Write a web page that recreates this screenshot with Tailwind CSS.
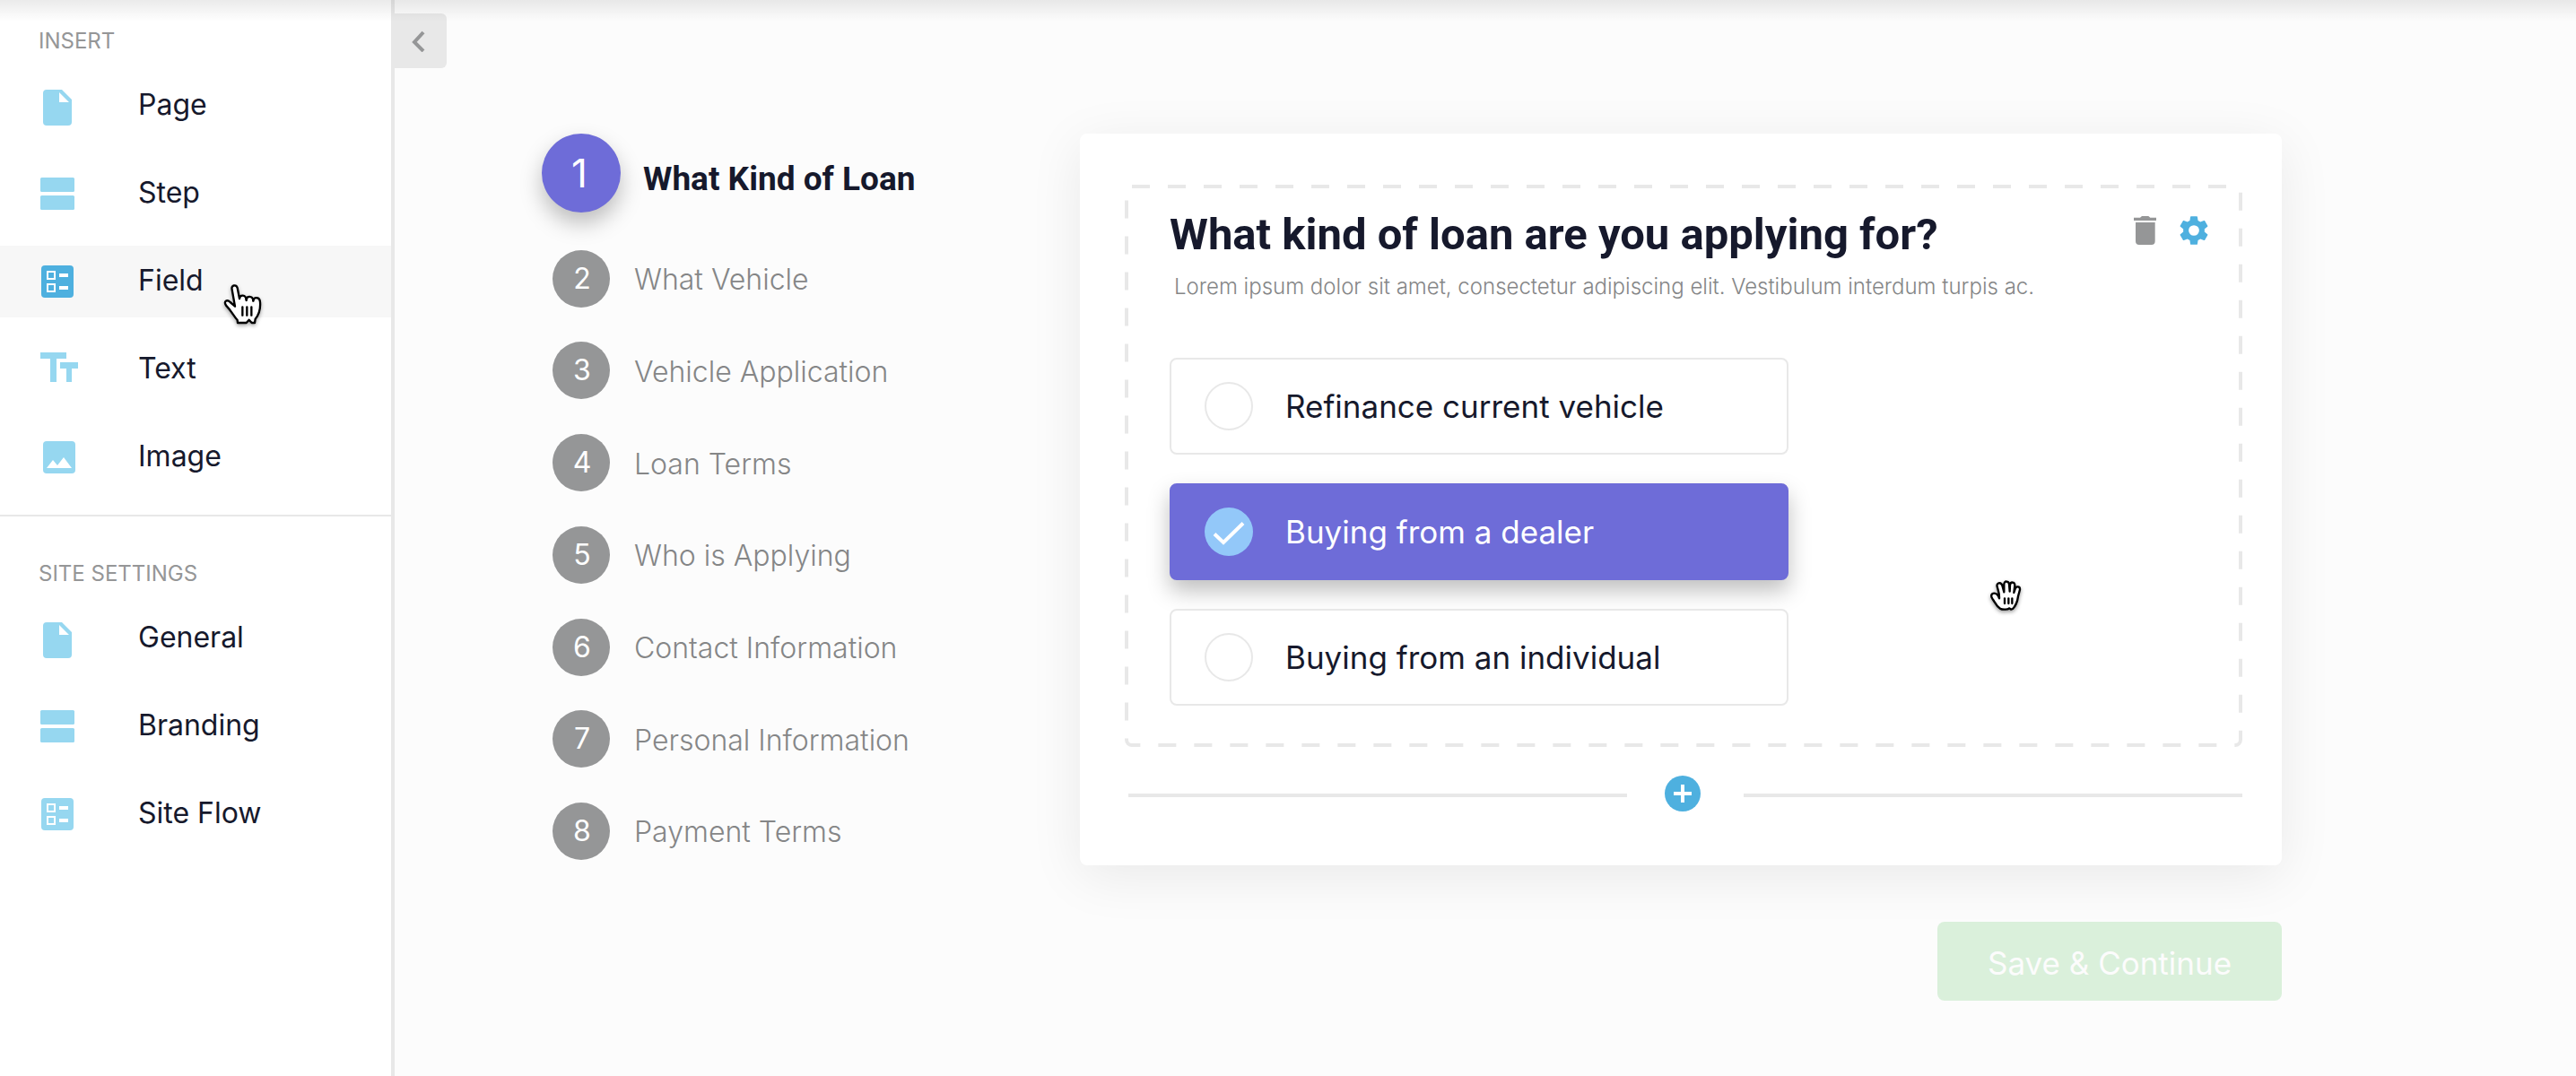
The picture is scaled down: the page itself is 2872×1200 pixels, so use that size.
<!DOCTYPE html>
<html lang="en">
<head>
<meta charset="utf-8">
<meta name="viewport" content="width=device-width, initial-scale=1">
<title>Form builder</title>
<script src="https://cdn.jsdelivr.net/npm/@tailwindcss/browser@4"></script>
</head>
<body class="bg-[#fcfcfc] font-['Inter',sans-serif] text-[#16192c]">

<!-- Icon sprite -->
<svg class="hidden" aria-hidden="true">
  <symbol id="i-page" viewBox="0 0 48 48"><path fill="currentColor" fill-rule="evenodd" d="M12 6H29L40 17V42a4 4 0 0 1-4 4H12a4 4 0 0 1-4-4V10a4 4 0 0 1 4-4ZM26 9V20H37Z"/></symbol>
  <symbol id="i-step" viewBox="0 0 48 48"><g fill="currentColor"><rect x="5" y="6" width="38" height="16" rx="1.500"/><rect x="5" y="26" width="38" height="16" rx="1.500"/></g></symbol>
  <symbol id="i-field" viewBox="0 0 48 48"><rect x="6" y="6" width="36" height="36" rx="4" fill="currentColor"/><g fill="none" stroke="#fff" stroke-width="2"><rect x="13" y="13" width="8" height="8"/><rect x="13" y="27" width="8" height="8"/></g><g fill="#fff"><rect x="26" y="15" width="10" height="4"/><rect x="26" y="29" width="10" height="4"/></g></symbol>
  <symbol id="i-text" viewBox="0 0 48 48"><path fill="currentColor" d="M5 5H34V12H23V38H16V12H5ZM27 16H47V23H40V38H34V23H27Z"/></symbol>
  <symbol id="i-image" viewBox="0 0 48 48"><rect x="8" y="6" width="36" height="36" rx="4" fill="currentColor"/><path fill="#fff" d="M12 36L19 27L24 33L31 24L40 36Z"/></symbol>
</svg>

<div class="relative flex min-h-screen">
  <aside class="w-[440px] shrink-0 border-r-4 border-[#e8e8e8] bg-white">
    <section class="border-b-2 border-[#e8e8e8] pt-[30px] pb-6">
      <h2 class="pl-[43px] text-2xl leading-8 text-[#959697]">INSERT</h2>
      <nav class="mt-4 flex flex-col gap-[18px] text-[32px] leading-[44px]">
        <a href="#" class="flex h-20 items-center gap-[66px] pl-10">
          <svg class="size-12 text-[#96d7f0]"><use href="#i-page"/></svg><span class="pb-[3px]">Page</span>
        </a>
        <a href="#" class="flex h-20 items-center gap-[66px] pl-10">
          <svg class="size-12 text-[#96d7f0]"><use href="#i-step"/></svg><span class="pb-[3px]">Step</span>
        </a>
        <a href="#" class="flex h-20 items-center gap-[66px] bg-[#f7f7f7] pl-10">
          <svg class="size-12 text-[#4eb0df]"><use href="#i-field"/></svg><span class="pb-[3px]">Field</span>
        </a>
        <a href="#" class="flex h-20 items-center gap-[66px] pl-10">
          <svg class="size-12 text-[#96d7f0]"><use href="#i-text"/></svg><span class="pb-[3px]">Text</span>
        </a>
        <a href="#" class="flex h-20 items-center gap-[66px] pl-10">
          <svg class="size-12 text-[#96d7f0]"><use href="#i-image"/></svg><span class="pb-[3px]">Image</span>
        </a>
      </nav>
    </section>
    <section class="pt-12">
      <h2 class="pl-[43px] text-2xl leading-8 text-[#959697]">SITE SETTINGS</h2>
      <nav class="mt-4 flex flex-col gap-[18px] text-[32px] leading-[44px]">
        <a href="#" class="flex h-20 items-center gap-[66px] pl-10">
          <svg class="size-12 text-[#96d7f0]"><use href="#i-page"/></svg><span class="pb-[3px]">General</span>
        </a>
        <a href="#" class="flex h-20 items-center gap-[66px] pl-10">
          <svg class="size-12 text-[#96d7f0]"><use href="#i-step"/></svg><span class="pb-[3px]">Branding</span>
        </a>
        <a href="#" class="flex h-20 items-center gap-[66px] pl-10">
          <svg class="size-12 text-[#96d7f0]"><use href="#i-field"/></svg><span class="pb-[3px]">Site Flow</span>
        </a>
      </nav>
    </section>
  </aside>

  <main class="flex min-w-0 flex-1 items-start pr-[328px]">
    <button type="button" aria-label="Collapse sidebar" class="mt-[15px] flex h-[61px] w-[58px] shrink-0 items-center rounded-r-md bg-[#e8e8e8] pl-[18px]">
      <svg class="h-6 w-4" viewBox="0 0 16 24" fill="none" stroke="#959697" stroke-width="4"><path d="M14 2L4 13L14 23"/></svg>
    </button>

    <ol class="ml-[106px] mt-[149px] flex h-[810px] w-[600px] shrink-0 flex-col justify-between text-[32px] leading-10 font-light text-[#858687]">
      <li class="mb-[3px] flex items-center gap-[25px] text-[#16192c]">
        <span class="flex size-[88px] items-center justify-center rounded-full bg-[#6e6cd8] pr-1 text-[44px] font-normal text-white shadow-[0_12px_24px_rgba(0,0,0,0.25)]">1</span>
        <span class="pt-[13px] font-['Roboto',sans-serif] text-[37px] font-bold">What Kind of Loan</span>
      </li>
      <li class="flex items-center gap-[27px] pl-3"><span class="flex size-16 items-center justify-center rounded-full bg-[#959697] pl-0.5 font-normal text-white">2</span><span class="pt-[3px]">What Vehicle</span></li>
      <li class="flex items-center gap-[27px] pl-3"><span class="flex size-16 items-center justify-center rounded-full bg-[#959697] pl-0.5 font-normal text-white">3</span><span class="pt-[3px]">Vehicle Application</span></li>
      <li class="flex items-center gap-[27px] pl-3"><span class="flex size-16 items-center justify-center rounded-full bg-[#959697] pl-0.5 font-normal text-white">4</span><span class="pt-[3px]">Loan Terms</span></li>
      <li class="flex items-center gap-[27px] pl-3"><span class="flex size-16 items-center justify-center rounded-full bg-[#959697] pl-0.5 font-normal text-white">5</span><span class="pt-[3px]">Who is Applying</span></li>
      <li class="flex items-center gap-[27px] pl-3"><span class="flex size-16 items-center justify-center rounded-full bg-[#959697] pl-0.5 font-normal text-white">6</span><span class="pt-[3px]">Contact Information</span></li>
      <li class="flex items-center gap-[27px] pl-3"><span class="flex size-16 items-center justify-center rounded-full bg-[#959697] pl-0.5 font-normal text-white">7</span><span class="pt-[3px]">Personal Information</span></li>
      <li class="flex items-center gap-[27px] pl-3"><span class="flex size-16 items-center justify-center rounded-full bg-[#959697] pl-0.5 font-normal text-white">8</span><span class="pt-[3px]">Payment Terms</span></li>
    </ol>

    <form class="mt-[149px] flex min-w-0 flex-1 flex-col items-end">
      <div class="w-full rounded-lg bg-white pt-[57px] pr-11 pb-[60px] pl-[50px] shadow-[0_12px_60px_rgba(0,0,0,0.08)]">
        <fieldset class="relative pt-6 pr-[35px] pb-[46px] pl-[50px]">
          <svg class="pointer-events-none absolute inset-0 size-full" fill="none" stroke="#e8e8e8" stroke-width="4" aria-hidden="true"><rect x="2" y="2" rx="6" stroke-dasharray="20" class="h-[calc(100%-4px)] w-[calc(100%-4px)]"/></svg>
          <div class="flex items-start">
            <h1 class="flex-1 font-['Roboto',sans-serif] text-[49px] leading-[64px] font-bold">What kind of loan are you applying for?</h1>
            <div class="mt-2 flex gap-[23px]">
              <button type="button" aria-label="Delete field"><svg class="h-8 w-[25px]" viewBox="0 0 75 96" fill="#959697"><path d="M21 5L27 0H49L55 5H75V15H0V5ZM6 21H71V84a12 12 0 0 1-12 12H18a12 12 0 0 1-12-12Z"/></svg></button>
              <button type="button" aria-label="Field settings"><svg class="size-[38px]" viewBox="0 0 24 24" fill="#4eb0df"><path fill-rule="evenodd" d="M19.430 12.980c.040-.320.070-.640.070-.980s-.030-.660-.070-.980l2.110-1.650c.190-.150.240-.420.120-.640l-2-3.460c-.120-.220-.390-.300-.610-.220l-2.490 1c-.520-.400-1.080-.730-1.690-.980l-.380-2.650C14.460 2.180 14.250 2 14 2h-4c-.250 0-.460.180-.490.420l-.380 2.650c-.610.250-1.170.590-1.690.980l-2.490-1c-.230-.090-.490 0-.610.220l-2 3.460c-.130.220-.070.490.120.640l2.110 1.650c-.040.320-.070.650-.070.980s.030.660.070.980l-2.110 1.650c-.190.150-.240.420-.120.640l2 3.460c.120.220.390.300.610.220l2.490-1c.520.400 1.080.730 1.690.980l.380 2.650c.030.240.240.420.490.420h4c.250 0 .460-.180.490-.420l.380-2.650c.610-.250 1.170-.590 1.690-.980l2.490 1c.230.090.490 0 .610-.220l2-3.460c.120-.220.070-.490-.120-.640l-2.110-1.650zM12 15.700a3.700 3.700 0 1 1 0-7.400 3.700 3.700 0 0 1 0 7.400z"/></svg></button>
            </div>
          </div>
          <p class="mt-2.5 pl-[5px] text-2xl leading-8 font-light text-[#858687]">Lorem ipsum dolor sit amet, consectetur adipiscing elit. Vestibulum interdum turpis ac.</p>

          <div class="mt-[63px] flex max-w-[690px] flex-col gap-8 text-[35px] leading-[44px]">
            <label class="flex h-[108px] items-center gap-9 rounded-lg border-2 border-[#e8e8e8] bg-white pl-[37px] has-checked:border-[#6e6cd8] has-checked:bg-[#6e6cd8] has-checked:text-white has-checked:shadow-[0_12px_24px_rgba(0,0,0,0.25)]">
              <input type="radio" name="loan" class="peer sr-only">
              <span class="size-[54px] rounded-full border-2 border-[#e8e8e8]"></span>Refinance current vehicle
            </label>
            <label class="flex h-[108px] items-center gap-9 rounded-lg border-2 border-[#e8e8e8] bg-white pl-[37px] has-checked:border-[#6e6cd8] has-checked:bg-[#6e6cd8] has-checked:text-white has-checked:shadow-[0_12px_24px_rgba(0,0,0,0.25)]">
              <input type="radio" name="loan" class="peer sr-only" checked>
              <svg class="size-[54px] rounded-full bg-[#93c8f9]" viewBox="0 0 54 54" fill="none" stroke="#fff" stroke-width="4"><path d="M11 29.500L21 39L43 17.500"/></svg>Buying from a dealer
            </label>
            <label class="flex h-[108px] items-center gap-9 rounded-lg border-2 border-[#e8e8e8] bg-white pl-[37px] has-checked:border-[#6e6cd8] has-checked:bg-[#6e6cd8] has-checked:text-white has-checked:shadow-[0_12px_24px_rgba(0,0,0,0.25)]">
              <input type="radio" name="loan" class="peer sr-only">
              <span class="size-[54px] rounded-full border-2 border-[#e8e8e8]"></span>Buying from an individual
            </label>
          </div>

          <!-- Open-hand cursor over the draggable field -->
          <svg class="pointer-events-none absolute top-[429px] left-[946px] size-[60px] drop-shadow-[0_2px_2px_rgba(0,0,0,0.4)]" viewBox="0 0 180 180" fill="#fff" stroke="#000" stroke-width="7" stroke-linejoin="round" stroke-linecap="round" aria-hidden="true"><path d="M87 97C84 88 78 80 70 80C60 80 58 90 64 98C72 108 76 122 90 131C98 136 108 134 116 133L121 130L126 134L132 132C142 122 148 106 150 90L156 68C157 56 143 55 140 66L136 78L139 54C139 40 124 41 123 52L122 74L120 50C119 38 103 37 103 50L103 76L97 54C92 40 76 46 80 58C83 70 88 80 87 97Z"/><path d="M105 97V114M118 97V114M130 97V114"/></svg>
        </fieldset>

        <div class="mt-8 flex items-center pl-1">
          <span class="mt-1 h-1 flex-1 bg-[#e8e8e8]"></span>
          <button type="button" aria-label="Add field" class="mr-12 ml-[42px] size-10 rounded-full bg-[#4eb0df]"><svg class="size-10" viewBox="0 0 40 40" stroke="#fff" stroke-width="4"><path d="M20 10V30M10 20H30"/></svg></button>
          <span class="mt-1 h-1 flex-1 bg-[#e8e8e8]"></span>
        </div>
      </div>
      <button type="submit" class="mt-[63px] h-[88px] w-96 rounded-lg bg-[#daf0db] pt-1 text-[35px] text-[#fcfcfc]">Save &amp; Continue</button>
    </form>
  </main>

  <div class="pointer-events-none absolute inset-x-0 top-0 h-6 bg-linear-to-b from-black/8 to-transparent"></div>

  <!-- Pointer cursor over the hovered menu entry -->
  <svg class="pointer-events-none absolute top-[305px] left-[240px] h-[65px] w-[60px] drop-shadow-[0_2px_2px_rgba(0,0,0,0.35)]" viewBox="0 0 180 195" fill="#fff" stroke="#000" stroke-width="7" stroke-linejoin="round" stroke-linecap="round" aria-hidden="true"><path d="M56 54C52 38 70 36 74 48L81 84C83 70 102 70 104 88C106 74 124 74 127 90C130 78 149 78 150 96C152 122 144 140 134 152L132 165H122L113 155L104 165H75L74 156C60 140 56 128 36 107C26 92 40 86 50 96L66 110Z"/><path d="M104 84V90M127 86V92M91 112V140M106 112V140M121 112V140"/></svg>
</div>
</body>
</html>
